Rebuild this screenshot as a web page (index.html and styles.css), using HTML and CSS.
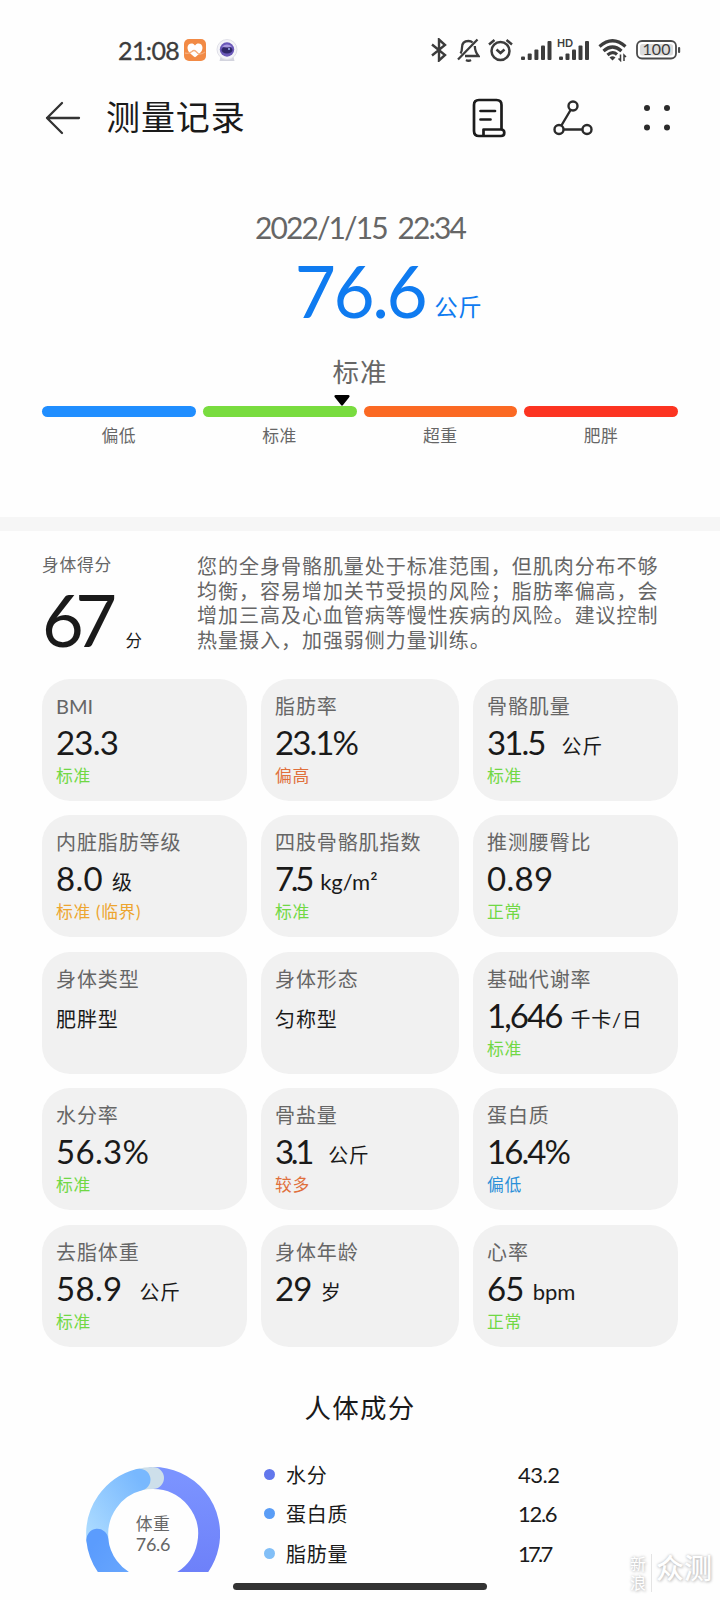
FILE: index.html
```
<!DOCTYPE html>
<html lang="zh-CN">
<head>
    <meta charset="UTF-8">
    <meta name="viewport" content="width=device-width, initial-scale=1.0">
    <title>测量记录</title>
    <link rel="stylesheet" href="styles.css">
</head>
<body>
    <div class="screen">
        <div class="statusbar">
            <div class="status-left">
                <span class="clock">21:08</span>
                <svg class="app-heart" width="22" height="22" viewBox="0 0 22 22">
                    <rect width="22" height="22" rx="5" fill="#f28a45"/>
                    <path d="M11 18.300C7 15.500 3.500 12.500 3.500 8.800 3.500 4.200 9 3.200 11 6.600 13 3.200 18.500 4.200 18.500 8.800 18.500 12.500 15 15.500 11 18.300Z" fill="#fff"/>
                    <path d="M1 14 Q5 15 8 12.500 Q10 10.500 12 12.500 L14 14.500 Q17 16 21 13" fill="none" stroke="#f6ad7c" stroke-width="1.300"/>
                </svg>
                <svg class="app-eye" width="22" height="22" viewBox="0 0 22 22">
                    <path d="M5 16h12l1.500 6h-15z" fill="#d3d4de"/>
                    <circle cx="11" cy="10.500" r="10" fill="#f4f4f8" stroke="#e1e1e8"/>
                    <circle cx="11" cy="10.500" r="7.200" fill="#6a58b8"/>
                    <ellipse cx="11" cy="11" rx="5.500" ry="3.500" fill="#2f2769"/>
                    <path d="M6 7.500Q11 3.500 16 7.500Q11 9.500 6 7.500Z" fill="#a99ae0"/>
                    <circle cx="13" cy="10" r="1" fill="#a3b4ee"/>
                </svg>
            </div>
            <div class="status-right">
                <svg width="16" height="24" viewBox="0 0 16 24" fill="none" stroke="#3c3c3c" stroke-width="2.400">
                    <path d="M1 6.500 14 17 8 22.500V1.500L14 7 1 17.500"/>
                </svg>
                <svg class="bell" width="23" height="24" viewBox="0 0 23 24" fill="none" stroke="#3c3c3c" stroke-width="2.300">
                    <path d="M3.500 15.500Q5 13.500 5 9.500C5 5.500 7.500 3 11.500 3Q14 3 15.600 4.500M17.800 8Q18 14 21.500 18H8M1 21.500 20.500 1.500M9 22Q11.500 23.500 14 22"/>
                </svg>
                <svg class="alarm" width="25" height="24" viewBox="0 0 25 24" fill="none" stroke="#3c3c3c" stroke-width="2.500">
                    <circle cx="12.500" cy="13" r="9"/>
                    <path d="M1 6.500 6.500 2M24 6.500 18.500 2M8.500 11.500 12.500 15 16.500 11.500"/>
                </svg>
                <svg class="signal" width="31" height="24" viewBox="0 0 31 24" fill="#3c3c3c">
                    <rect x="0" y="18.500" width="4" height="3.500" rx="1"/>
                    <rect x="6.700" y="15.500" width="4" height="6.500" rx="1"/>
                    <rect x="13.400" y="11.500" width="4" height="10.500" rx="1"/>
                    <rect x="20" y="7.500" width="4" height="14.500" rx="1"/>
                    <rect x="26.500" y="3" width="4" height="19" rx="1"/>
                </svg>
                <svg class="signal-hd" width="33" height="24" viewBox="0 0 33 24" fill="#3c3c3c">
                    <text x="0" y="9" class="hd">HD</text>
                    <rect x="2" y="18.500" width="4" height="3.500" rx="1"/>
                    <rect x="8.500" y="15.500" width="4" height="6.500" rx="1"/>
                    <rect x="15" y="11.500" width="4" height="10.500" rx="1"/>
                    <rect x="21.500" y="7.500" width="4" height="14.500" rx="1"/>
                    <rect x="28" y="3" width="4" height="19" rx="1"/>
                </svg>
                <svg class="wifi" width="30" height="24" viewBox="0 0 30 24" fill="none" stroke="#3c3c3c" stroke-width="3.200">
                    <path d="M1.500 8.500Q14.500-3 27.500 8.500M5.500 13Q14.500 5 23.500 13M9.500 17Q14.500 12.500 19 16.500"/>
                    <path d="M11.500 19.500Q14.500 17 17.500 19.500L14.500 22.500Z" fill="#3c3c3c" stroke="none"/>
                    <path d="M22.500 16.500V22.500L20.500 20.500M26 23V17L28 19" stroke-width="1.500"/>
                </svg>
                <svg class="battery" width="45" height="24" viewBox="0 0 45 24">
                    <rect x="1" y="3" width="39" height="17.500" rx="5" fill="#fff" stroke="#4a4a4a" stroke-width="1.800"/>
                    <rect x="4" y="6" width="33" height="11.500" rx="2.500" fill="#dcdcdc"/>
                    <rect x="42" y="9" width="2.200" height="6" rx="1" fill="#4a4a4a"/>
                    <text x="20.500" y="17.200" text-anchor="middle" class="battery-text">100</text>
                </svg>
            </div>
        </div>

        <header class="header">
            <svg class="back" width="36" height="34" viewBox="0 0 36 34" fill="none" stroke="#333" stroke-width="2.300" stroke-linecap="round" stroke-linejoin="round">
                <path d="M17 2 2 17 17 32M2 17H34"/>
            </svg>
            <h1 class="title">测量记录</h1>
            <svg width="34" height="40" viewBox="0 0 34 40" fill="none" stroke="#1c1c1c" stroke-width="2.700" stroke-linejoin="round" stroke-linecap="round">
                <path d="M29.500 31.500V7Q29.500 2 24.500 2H7Q2 2 2 7V33Q2 38 7 38H29Q32.300 38 32.300 34.700 32.300 31.500 29 31.500H11.500V38M8.500 13H23M8.500 21.500H18.500"/>
            </svg>
            <svg class="share" width="40" height="36" viewBox="0 0 40 36" fill="none" stroke="#2b2b2b" stroke-width="2.400">
                <circle cx="20" cy="6" r="4.500"/>
                <circle cx="6" cy="29.500" r="4.500"/>
                <circle cx="34" cy="29.500" r="4.500"/>
                <path d="M17.600 10 8.400 25.500M10.500 29.500H29.500"/>
            </svg>
            <svg class="more" width="28" height="28" viewBox="0 0 28 28" fill="#2b2b2b">
                <circle cx="4" cy="4" r="3"/>
                <circle cx="24" cy="4" r="3"/>
                <circle cx="4" cy="23.500" r="3"/>
                <circle cx="24" cy="23.500" r="3"/>
            </svg>
        </header>

        <section class="summary">
            <div class="date">2022/1/15 22:34</div>
            <div class="weight">
                <span class="weight-value">76.6</span>
                <span class="weight-unit">公斤</span>
            </div>
            <div class="weight-level">标准</div>
            <div class="scale">
                <div class="scale-item low">偏低</div>
                <div class="scale-item normal">标准</div>
                <div class="scale-item over">超重</div>
                <div class="scale-item fat">肥胖</div>
                <svg class="pointer" width="16" height="11" viewBox="0 0 16 11"><path d="M1.500 0H14.500Q16.500 .5 15 2.500L9 10Q8 11.500 7 10L1 2.500Q-.5 .5 1.500 0Z"/></svg>
            </div>
        </section>

        <section class="score">
            <div class="score-left">
                <div class="score-label">身体得分</div>
                <div class="score-value">67<span class="score-unit">分</span></div>
            </div>
            <p class="advice">您的全身骨骼肌量处于标准范围，但肌肉分布不够<br>均衡，容易增加关节受损的风险；脂肪率偏高，会<br>增加三高及心血管病等慢性疾病的风险。建议控制<br>热量摄入，加强弱侧力量训练。</p>
        </section>

        <section class="cards">
            <div class="card">
                <div class="label bmi">BMI</div>
                <div class="value">23.3</div>
                <div class="state green">标准</div>
            </div>
            <div class="card">
                <div class="label">脂肪率</div>
                <div class="value narrow">23.1%</div>
                <div class="state orange">偏高</div>
            </div>
            <div class="card">
                <div class="label">骨骼肌量</div>
                <div class="value narrow">31.5<span class="unit wide">公斤</span></div>
                <div class="state green">标准</div>
            </div>
            <div class="card">
                <div class="label">内脏脂肪等级</div>
                <div class="value loose">8.0<span class="unit">级</span></div>
                <div class="state yellow">标准 (临界)</div>
            </div>
            <div class="card">
                <div class="label">四肢骨骼肌指数</div>
                <div class="value narrower">7.5<span class="unit latin">kg/m²</span></div>
                <div class="state green">标准</div>
            </div>
            <div class="card">
                <div class="label">推测腰臀比</div>
                <div class="value loose">0.89</div>
                <div class="state green">正常</div>
            </div>
            <div class="card">
                <div class="label">身体类型</div>
                <div class="value text">肥胖型</div>
            </div>
            <div class="card">
                <div class="label">身体形态</div>
                <div class="value text">匀称型</div>
            </div>
            <div class="card">
                <div class="label">基础代谢率</div>
                <div class="value narrow">1,646<span class="unit">千卡/日</span></div>
                <div class="state green">标准</div>
            </div>
            <div class="card">
                <div class="label">水分率</div>
                <div class="value loose">56.3%</div>
                <div class="state green">标准</div>
            </div>
            <div class="card">
                <div class="label">骨盐量</div>
                <div class="value narrower">3.1<span class="unit wide">公斤</span></div>
                <div class="state orange">较多</div>
            </div>
            <div class="card">
                <div class="label">蛋白质</div>
                <div class="value narrow">16.4%</div>
                <div class="state blue">偏低</div>
            </div>
            <div class="card">
                <div class="label">去脂体重</div>
                <div class="value loose">58.9<span class="unit wide">公斤</span></div>
                <div class="state green">标准</div>
            </div>
            <div class="card">
                <div class="label">身体年龄</div>
                <div class="value">29<span class="unit">岁</span></div>
            </div>
            <div class="card">
                <div class="label">心率</div>
                <div class="value">65<span class="unit latin">bpm</span></div>
                <div class="state green">正常</div>
            </div>
        </section>

        <h2 class="subtitle">人体成分</h2>

        <section class="composition">
            <div class="donut">
                <svg width="134" height="105" viewBox="0 0 134 105" fill="none" stroke-width="22" stroke-linecap="round">
                    <defs>
                        <linearGradient id="water" x1="0" y1="0" x2="0" y2="1">
                            <stop offset="0" stop-color="#7b93ff"/>
                            <stop offset="1" stop-color="#6b7df8"/>
                        </linearGradient>
                        <linearGradient id="fat" x1="0" y1="1" x2="1" y2="0">
                            <stop offset="0" stop-color="#a9d9ff"/>
                            <stop offset="1" stop-color="#78b8fe"/>
                        </linearGradient>
                        <linearGradient id="protein" x1="0" y1="0" x2="1" y2="1">
                            <stop offset="0" stop-color="#5b9cfd"/>
                            <stop offset="1" stop-color="#6aa8fd"/>
                        </linearGradient>
                    </defs>
                    <path d="M67 11A56 56 0 1 1 45.100 118.500" stroke="url(#water)"/>
                    <path d="M53.500 12.700A56 56 0 0 1 67 11" stroke="#cddfea"/>
                    <path d="M11.500 72.800A56 56 0 0 1 53.500 12.700" stroke="url(#fat)"/>
                    <path d="M45.100 118.500A56 56 0 0 1 11.300 72.800" stroke="url(#protein)"/>
                </svg>
                <div class="donut-text">体重<br><span>76.6</span></div>
            </div>
            <div class="legend">
                <div class="legend-row"><i class="dot dot-water"></i><span>水分</span><b>43.2</b></div>
                <div class="legend-row"><i class="dot dot-protein"></i><span>蛋白质</span><b class="narrow">12.6</b></div>
                <div class="legend-row"><i class="dot dot-fat"></i><span>脂肪量</span><b class="narrower">17.7</b></div>
            </div>
        </section>

        <div class="home-bar"></div>

        <div class="watermark">
            <span class="mark-small">新<br>浪</span>
            <span class="mark-big">众测</span>
        </div>
    </div>
</body>
</html>
```
FILE: styles.css
```
* {
    box-sizing: border-box;
}

body {
    margin: 0;
    background: #fefefe;
    color: #1a1a1a;
    font-family: Lato, 'Noto Sans CJK SC', sans-serif;
}

svg {
    display: block;
    flex: none;
}

.screen {
    position: relative;
    width: 720px;
    height: 1600px;
    overflow: hidden;
    display: flex;
    flex-direction: column;
}

/* status bar */
.statusbar {
    height: 80px;
    padding: 38px 39px 0 118px;
    display: flex;
    justify-content: space-between;
    align-items: flex-start;
}

.status-left,
.status-right {
    display: flex;
    height: 24px;
    align-items: center;
}

.clock {
    width: 66px;
    font-size: 25px;
    line-height: 22px;
    letter-spacing: -0.6px;
    color: #3c3c3c;
    -webkit-text-stroke: 0.3px #3c3c3c;
}

.app-eye {
    margin-left: 10px;
}

.bell {
    margin-left: 10px;
}

.alarm {
    margin-left: 8px;
}

.signal {
    margin-left: 8px;
}

.signal-hd {
    margin-left: 5px;
}

.wifi {
    margin-left: 8px;
}

.battery {
    margin-left: 8px;
}

.hd {
    font-size: 10.500px;
    font-weight: bold;
}

.battery-text {
    font-size: 16px;
    fill: #3c3c3c;
}

/* title row */
.header {
    height: 75px;
    padding: 0 49px 0 45px;
    display: flex;
    align-items: center;
}

.title {
    flex: 1;
    margin: -2px 0 0 25px;
    font-size: 34px;
    font-weight: 400;
    letter-spacing: 0.9px;
    line-height: 50px;
}

.share {
    margin-left: 47px;
}

.more {
    margin-left: 50px;
}

/* weight summary */
.summary {
    height: 376px;
    padding: 51px 42px 0;
    border-bottom: 14px solid #f6f6f6;
    text-align: center;
    color: #666;
}

.date {
    height: 42px;
    line-height: 42px;
    font-size: 30px;
    letter-spacing: -1.900px;
    word-spacing: 5px;
}

.weight {
    display: grid;
    grid-template-columns: 1fr auto 1fr;
    align-items: baseline;
    height: 101px;
    color: #0f7bf0;
}

.weight-value {
    grid-column: 2;
    font-size: 71px;
    line-height: 86px;
    letter-spacing: -2.500px;
}

.weight-unit {
    position: relative;
    top: -2px;
    margin-left: 9px;
    text-align: left;
    font-size: 23.500px;
    letter-spacing: 0.7px;
}

.weight-level {
    height: 57px;
    line-height: 46px;
    font-size: 26.500px;
    letter-spacing: 1px;
}

.scale {
    position: relative;
    display: grid;
    grid-template-columns: repeat(4, 1fr);
    gap: 7px;
}

.scale-item {
    font-size: 16.800px;
    line-height: 38px;
    letter-spacing: 0.5px;
}

.scale-item::before {
    content: '';
    display: block;
    height: 11px;
    border-radius: 6px;
}

.low::before {
    background: #208eff;
}

.normal::before {
    background: #79dc3f;
}

.over::before {
    background: #fb6923;
}

.fat::before {
    background: #fc3421;
}

.pointer {
    position: absolute;
    left: 292px;
    top: -11px;
}

/* body score */
.score {
    height: 148px;
    padding: 20px 42px 0;
    display: flex;
}

.score-left {
    width: 155px;
}

.score-label {
    color: #666;
    font-size: 16.800px;
    line-height: 27px;
    letter-spacing: 0.7px;
}

.score-value {
    font-size: 72px;
    line-height: 82px;
    letter-spacing: -8.500px;
}

.score-unit {
    margin-left: 17px;
    font-size: 16.500px;
    line-height: 20px;
    letter-spacing: 0;
}

.advice {
    margin: 3px 0 0;
    color: #666;
    font-size: 20px;
    line-height: 24.500px;
    letter-spacing: 0.98px;
    white-space: nowrap;
}

/* metric cards */
.cards {
    padding: 0 42px;
    display: grid;
    grid-template-columns: 205px 198px 205px;
    grid-auto-rows: 122px;
    gap: 14.400px 14px;
}

.card {
    padding: 14px 0 0 14px;
    border-radius: 28px;
    background: #f1f1f1;
    white-space: nowrap;
}

.label {
    height: 28px;
    line-height: 27px;
    font-size: 20px;
    letter-spacing: 0.9px;
    color: #666;
}

.label.bmi {
    letter-spacing: 0;
}

.value {
    height: 42px;
    line-height: 42px;
    font-size: 33px;
    letter-spacing: -0.8px;
}

.value.text {
    line-height: 50px;
    font-size: 20px;
    letter-spacing: 0.9px;
}

.value.narrow {
    letter-spacing: -1.900px;
}

.value.narrower {
    letter-spacing: -3.300px;
}

.value.loose {
    letter-spacing: 0.3px;
}

.unit {
    position: relative;
    top: -1px;
    margin-left: 9px;
    font-size: 20px;
    line-height: 20px;
    letter-spacing: 0.7px;
}

.unit.wide {
    margin-left: 17px;
}

.unit.latin {
    font-size: 22px;
    letter-spacing: 0;
}

.state {
    height: 24px;
    line-height: 26px;
    font-size: 16.800px;
    letter-spacing: 0.7px;
}

.green {
    color: #70d844;
}

.orange {
    color: #e0703c;
}

.yellow {
    color: #eda52f;
}

.blue {
    color: #2a8fd8;
}

/* body composition */
.subtitle {
    margin: 41px 0 0;
    text-align: center;
    font-size: 26.500px;
    font-weight: 400;
    line-height: 40px;
    letter-spacing: 1.300px;
}

.composition {
    height: 105px;
    margin-top: 39px;
    padding-left: 86px;
    display: flex;
}

.donut {
    position: relative;
    width: 134px;
}

.donut-text {
    position: absolute;
    top: 46px;
    left: 0;
    width: 134px;
    text-align: center;
    color: #666;
    font-size: 16.800px;
    line-height: 21px;
    letter-spacing: 0.5px;
}

.donut-text span {
    font-size: 18px;
    letter-spacing: -0.3px;
}

.legend {
    margin: -12px 0 0 44px;
}

.legend-row {
    height: 39.600px;
    display: flex;
    align-items: center;
    font-size: 20px;
}

.dot {
    width: 11px;
    height: 11px;
    margin-right: 11px;
    border-radius: 50%;
}

.dot-water {
    background: #6277ec;
}

.dot-protein {
    background: #5a9df6;
}

.dot-fat {
    background: #82bff7;
}

.legend-row span {
    width: 232px;
    letter-spacing: 0.8px;
}

.legend-row b {
    font-weight: 400;
    font-size: 22px;
    letter-spacing: -0.5px;
}

.legend-row .narrow {
    letter-spacing: -1.300px;
}

.legend-row .narrower {
    letter-spacing: -2.700px;
}

.home-bar {
    width: 254px;
    height: 7px;
    margin: 11px 0 0 233px;
    border-radius: 4px;
    background: #333;
}

.watermark {
    position: absolute;
    right: 8px;
    bottom: 8px;
    display: flex;
    align-items: center;
    color: #fff;
    text-shadow: 0 0 3px #bbb, 1px 1px 3px #ccc;
}

.mark-small {
    padding-right: 5px;
    border-right: 1px solid #e4e4e4;
    font-size: 16px;
    line-height: 19px;
}

.mark-big {
    margin: -10px 0 0 4px;
    font-size: 28px;
    font-weight: 500;
    line-height: 34px;
}
```
